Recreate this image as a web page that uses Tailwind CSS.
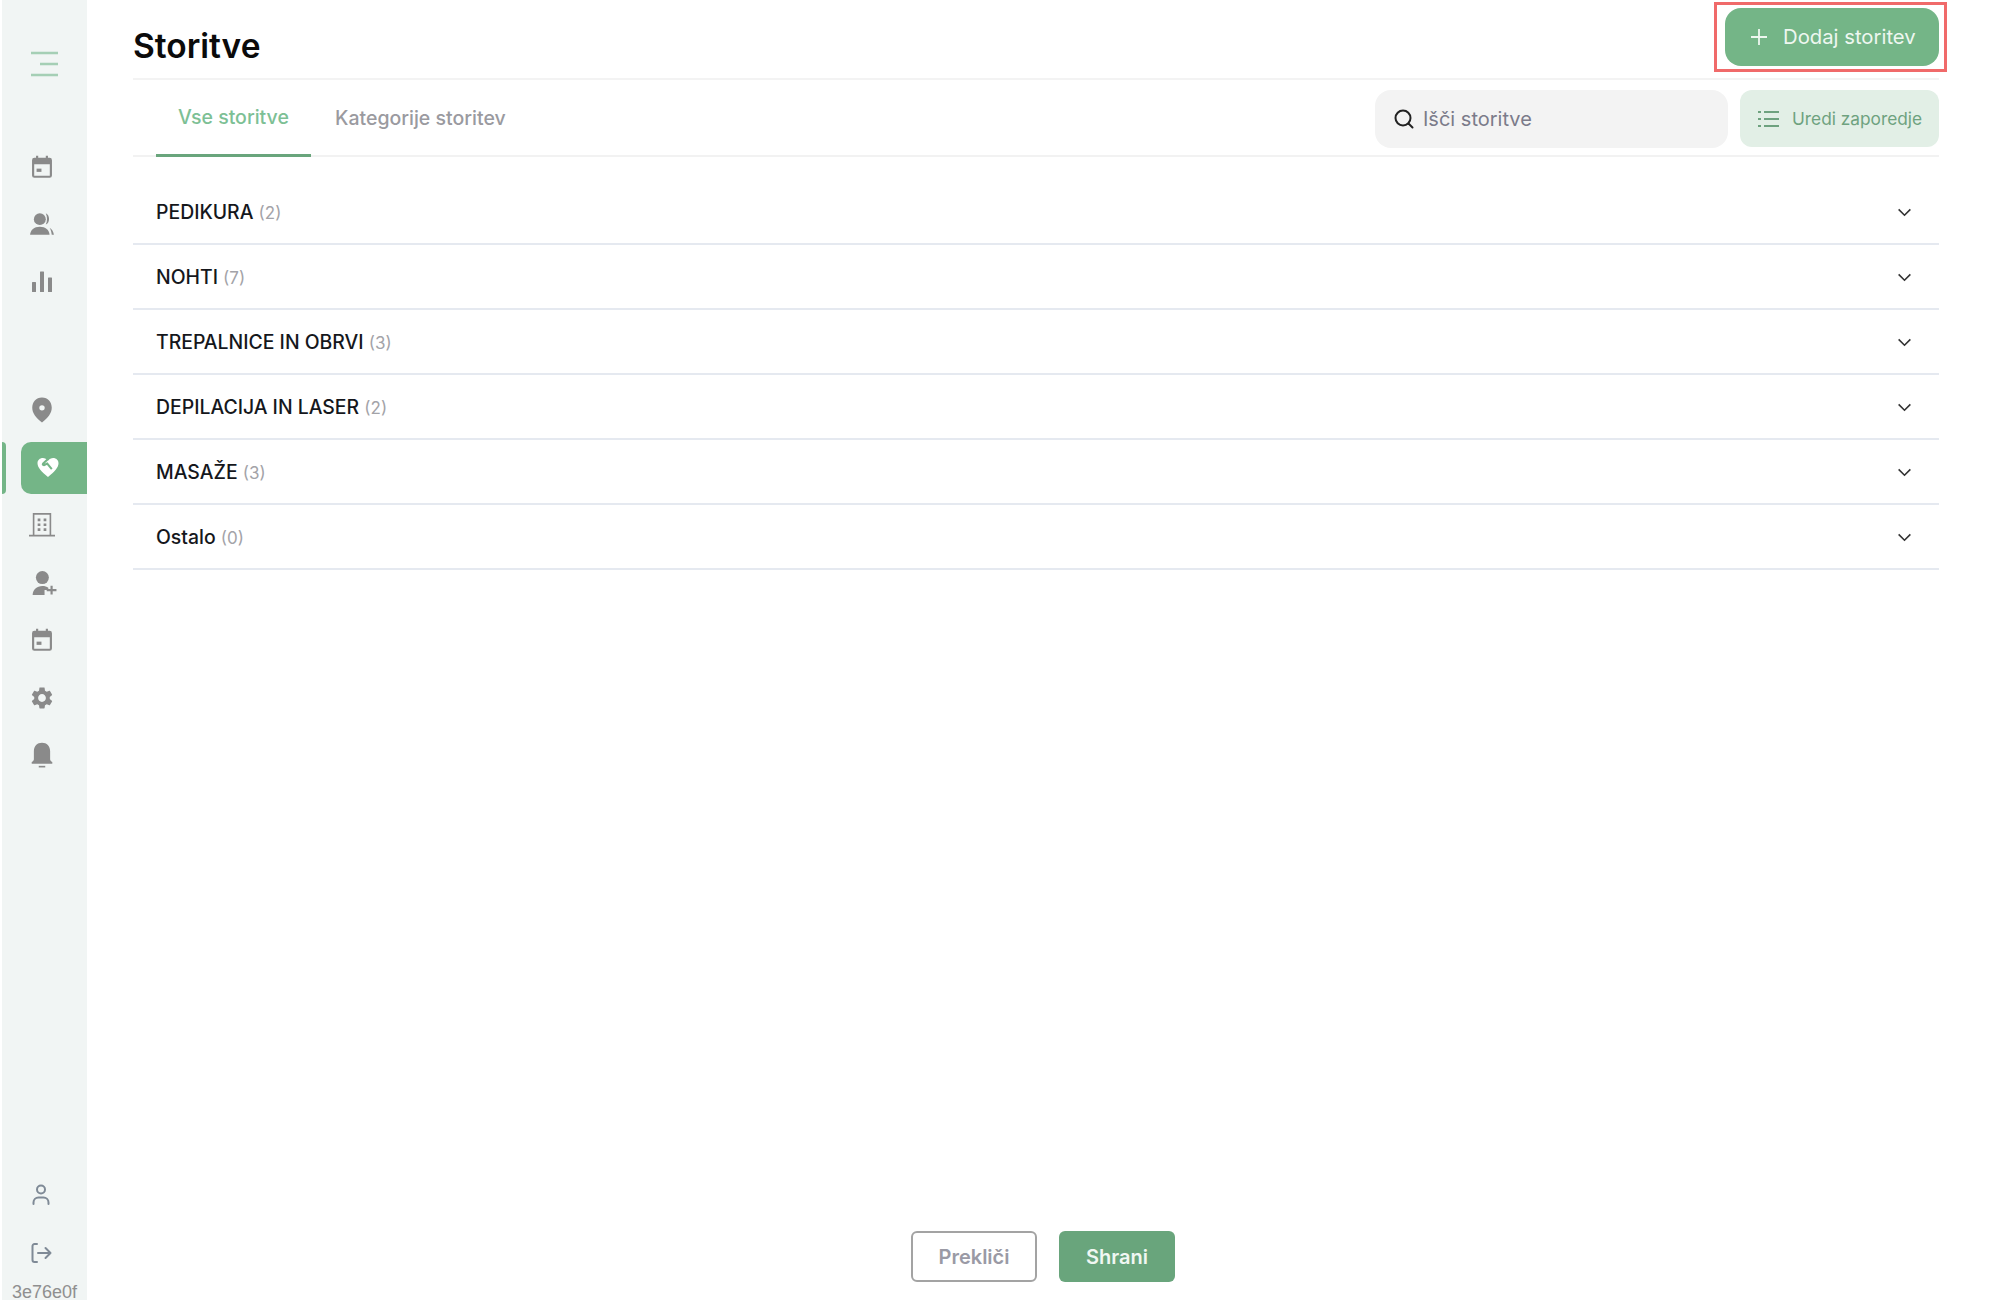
<!DOCTYPE html>
<html lang="sl">
<head>
  <meta charset="UTF-8">
  <title>Storitve</title>
  <script src="https://cdn.jsdelivr.net/npm/@tailwindcss/browser@4"></script>
</head>
<body class="bg-white font-['Inter',sans-serif]">
  <div class="flex h-[1300px] w-[2000px] overflow-hidden">

    <!-- Sidebar -->
    <aside class="ml-[2px] flex h-full w-[85px] shrink-0 flex-col bg-[#f1f5f4]">
      <div class="flex h-[128px] shrink-0 items-center pl-[29px]">
        <svg class="h-[28px] w-[28px]" viewBox="0 0 28 28" fill="none" stroke="#a5cfb5" stroke-width="2.6">
          <path d="M0 3h27M9 14h18M0 25h27"/>
        </svg>
      </div>
      <div class="h-[10px] shrink-0"></div>

      <nav class="flex flex-col text-[#8a8a8a]">
        <a class="flex h-[57.5px] items-center pl-[27px]">
          <svg class="h-[26px] w-[26px]" viewBox="0 0 24 24" fill="currentColor"><path fill-rule="evenodd" d="M19 3.500h-1.500V1.500h-2v2h-7v-2h-2v2H5a2.200 2.200 0 0 0-2.200 2.200v14.100A2.200 2.200 0 0 0 5 22h14a2.200 2.200 0 0 0 2.200-2.200V5.700A2.200 2.200 0 0 0 19 3.500zM4.800 9.500v10.300c0 .100.100.200.200.200h14c.100 0 .200-.100.200-.200V9.500z"/><rect x="7" y="13.500" width="4.500" height="3"/></svg>
        </a>
        <a class="flex h-[57.5px] items-center pl-[27px]">
          <svg class="h-[26px] w-[26px]" viewBox="0 0 24 24" fill="currentColor"><circle cx="10" cy="7.500" r="5.500"/><path d="M1 22c.400-4.700 3.700-7.500 9-7.500s8.600 2.800 9 7.500z"/><path d="M15.500 2c4 1.500 4 9 0 10.500 1.500-3 1.500-7.500 0-10.500z"/><path d="M19 15.500c2.200 1.200 3.500 3.500 4 6.500h-2c-.300-2.600-.800-4.500-2-6.500z"/></svg>
        </a>
        <a class="flex h-[57.5px] items-center pl-[28px]">
          <svg class="h-[24px] w-[24px]" viewBox="0 0 24 24" fill="currentColor"><rect x="2" y="12" width="4" height="10" rx=".500"/><rect x="10" y="1.500" width="4" height="20.500" rx=".500"/><rect x="18" y="7.500" width="4" height="14.500" rx=".500"/></svg>
        </a>

        <div class="h-[71px]"></div>

        <a class="flex h-[57.5px] items-center pl-[27px]">
          <svg class="h-[26px] w-[26px]" viewBox="0 0 24 24" fill="currentColor"><path fill-rule="evenodd" d="M12 .500C6.500 .500 3 4.700 3 10c0 5 3.500 9.500 9 13.500C17.500 19.500 21 15 21 10 21 4.700 17.500 .500 12 .500zM12 12.500a2.500 2.500 0 1 1 0-5 2.500 2.500 0 0 1 0 5z"/></svg>
        </a>

        <!-- Active item -->
        <a class="relative flex h-[57.5px] items-center">
          <span class="absolute left-0 top-[2.500px] h-[52px] w-[4px] rounded-r-[4px] bg-[#74b587]"></span>
          <span class="ml-[19px] flex h-[52px] w-[66px] items-center rounded-l-[10px] bg-[#74b587] pb-[2px] pl-[15px]">
            <svg class="h-[24px] w-[24px]" viewBox="0 0 24 24" fill="#fff"><path d="M12 22C5.500 16.500 1.500 12.500 1.500 8.200 1.500 5.200 3.900 3 6.800 3c2 0 3.900 1 5.200 2.700C13.300 4 15.200 3 17.200 3c2.900 0 5.300 2.200 5.300 5.200 0 4.300-4 8.300-10.500 13.800z"/><path d="M12.500 3.500 7 8.700Q6.200 10 8 10.200l3.200-1.700 4.600 5.700" fill="none" stroke="#74b587" stroke-width="2"/></svg>
          </span>
        </a>

        <a class="flex h-[57.5px] items-center pl-[27px]">
          <svg class="h-[26px] w-[26px]" viewBox="0 0 24 24" fill="currentColor"><path fill-rule="evenodd" d="M3.500 1h17v20H24v1.500H0V21h3.500zM5 2.500V21h14V2.500z"/><path d="M8 6h2.500v2.500H8zM13.500 6H16v2.500h-2.500zM8 10.500h2.500V13H8zM13.500 10.500H16V13h-2.500zM8 15h2.500v2.500H8zM13.500 15H16v2.500h-2.500z"/></svg>
        </a>
        <a class="flex h-[57.5px] items-center pl-[29px]">
          <svg class="h-[26px] w-[26px]" viewBox="0 0 24 24" fill="currentColor"><circle cx="10.500" cy="7" r="6"/><path d="M1.500 23c.300-5 3.800-8.200 9-8.200 2.200 0 4 .500 5.500 1.500v2.200h-3.500V23z"/><path d="M18 16.500h2v3h3.500v2H20v3h-2v-3h-3.500v-2H18z" transform="translate(0 -2)"/></svg>
        </a>
        <a class="flex h-[57.5px] items-center pl-[27px]">
          <svg class="h-[26px] w-[26px]" viewBox="0 0 24 24" fill="currentColor"><path fill-rule="evenodd" d="M19 3.500h-1.500V1.500h-2v2h-7v-2h-2v2H5a2.200 2.200 0 0 0-2.200 2.200v14.100A2.200 2.200 0 0 0 5 22h14a2.200 2.200 0 0 0 2.200-2.200V5.700A2.200 2.200 0 0 0 19 3.500zM4.800 9.500v10.300c0 .100.100.200.200.200h14c.100 0 .200-.100.200-.200V9.500z"/><rect x="7" y="13.500" width="4.500" height="3"/></svg>
        </a>
        <a class="flex h-[57.5px] items-center pl-[27px]">
          <svg class="h-[26px] w-[26px]" viewBox="0 0 24 24" fill="currentColor"><path fill-rule="evenodd" d="M19.140 12.940c.040-.300.060-.610.060-.940 0-.320-.020-.640-.070-.940l2.030-1.580c.180-.140.230-.410.120-.610l-1.920-3.320c-.120-.220-.370-.290-.590-.220l-2.390.960c-.500-.380-1.030-.700-1.620-.940l-.360-2.540c-.040-.240-.240-.410-.480-.410h-3.840c-.240 0-.430.170-.470.410l-.360 2.540c-.590.240-1.130.570-1.620.940l-2.390-.960c-.220-.080-.470 0-.590.220L2.740 8.870c-.120.210-.080.470.120.610l2.030 1.580c-.050.300-.090.630-.090.940s.020.640.070.940l-2.030 1.580c-.180.140-.230.410-.120.610l1.920 3.320c.120.220.370.290.590.220l2.390-.960c.500.380 1.030.700 1.620.940l.360 2.540c.050.240.240.410.480.410h3.840c.240 0 .440-.170.470-.410l.360-2.540c.590-.240 1.130-.560 1.620-.940l2.390.960c.220.080.470 0 .590-.220l1.920-3.320c.120-.220.070-.470-.120-.610l-2.010-1.580zM12 15.600c-1.980 0-3.600-1.620-3.600-3.600s1.620-3.600 3.600-3.600 3.600 1.620 3.600 3.600-1.620 3.600-3.600 3.600z"/></svg>
        </a>
        <a class="flex h-[57.5px] items-center pl-[27px]">
          <svg class="h-[26px] w-[26px]" viewBox="0 0 24 24" fill="currentColor"><path d="M12 .800c-4.500 0-7.500 3.200-7.500 7.500v7.700c0 1-.700 2-2 2.500V20h19v-1.500c-1.300-.500-2-1.500-2-2.500V8.300c0-4.300-3-7.500-7.500-7.500z"/><rect x="9" y="22" width="6" height="1.500"/></svg>
        </a>
      </nav>

      <div class="mt-auto flex flex-col">
        <a class="flex h-[58px] items-center pl-[27px]">
          <svg class="h-[24px] w-[24px]" viewBox="0 0 24 24" fill="none" stroke="#7f8a96" stroke-width="2" stroke-linecap="round"><circle cx="12" cy="6.500" r="4"/><path d="M4.500 21v-1.500a5 5 0 0 1 5-5h5a5 5 0 0 1 5 5V21"/></svg>
        </a>
        <a class="mt-[2px] flex h-[53px] items-center pl-[27px]">
          <svg class="h-[24px] w-[24px]" viewBox="0 0 24 24" fill="none" stroke="#7f8a96" stroke-width="2" stroke-linecap="round" stroke-linejoin="round"><path d="M8 3H5.500a2 2 0 0 0-2 2v14a2 2 0 0 0 2 2H8M9 12h12.500M16.500 7l5 5-5 5"/></svg>
        </a>
        <div class="h-[21px] pt-[5px] text-center font-['Liberation_Sans',sans-serif] text-[18px] leading-[16px] text-[#8f8f8f]">3e76e0f</div>
      </div>
    </aside>

    <!-- Main -->
    <main class="flex min-w-0 flex-1 flex-col pl-[46px] pr-[61px]">
      <header class="flex h-[80px] shrink-0 justify-between border-b-2 border-[#f3f3f3]">
        <h1 class="pt-[23px] text-[33.5px] font-semibold leading-[46px] text-[#0b0b0b]">Storitve</h1>
        <div class="relative mt-[8px] h-[58px]">
          <button class="flex h-[58px] w-[214px] items-center rounded-[16px] bg-[#74b587] pl-[25px] text-[20.3px] text-[#eef7f0]">
            <svg class="mr-[15px] h-[18px] w-[18px]" viewBox="0 0 18 18" fill="none" stroke="#eef7f0" stroke-width="1.800"><path d="M9 1v16M1 9h16"/></svg>
            Dodaj storitev
          </button>
          <span class="absolute -bottom-[6px] -left-[11px] -right-[8px] -top-[6px] border-[3px] border-[#f06a6a]"></span>
        </div>
      </header>

      <div class="flex h-[77px] shrink-0 justify-between border-b-2 border-[#f2f2f2] pl-[23px]">
        <div class="flex">
          <a class="-mb-[2px] flex h-[77px] w-[155px] items-center justify-center border-b-[3px] border-[#69a57c] pt-[1px] text-[19.5px] font-medium text-[#7dc095]">Vse storitve</a>
          <a class="ml-[24px] flex h-[77px] items-center text-[19.5px] font-medium text-[#9a9a9f]">Kategorije storitev</a>
        </div>
        <div class="flex items-start gap-[12px] pt-[10px]">
          <label class="flex h-[58px] w-[353px] items-center rounded-[16px] bg-[#f3f3f3] pl-[19px]">
            <svg class="mr-[9px] h-[20px] w-[20px]" viewBox="0 0 20 20" fill="none" stroke="#222" stroke-width="2" stroke-linecap="round"><circle cx="9" cy="9" r="7.500"/><path d="M14.500 14.500 18.500 18.500"/></svg>
            <span class="text-[20px] text-[#7b7b8a]">Išči storitve</span>
          </label>
          <button class="flex h-[57px] w-[199px] items-center rounded-[12px] bg-[#e2efe6] pl-[18px] text-[17.3px] text-[#6ea27f]">
            <svg class="mr-[13px] h-[20px] w-[21px]" viewBox="0 0 21 20" fill="none" stroke="#6ea27f" stroke-width="2"><path d="M0 3h3M6 3h15M0 10h3M6 10h15M0 17h3M6 17h15"/></svg>
            Uredi zaporedje
          </button>
        </div>
      </div>

      <ul class="mt-[23px] flex flex-col">
        <li class="flex h-[65px] items-center justify-between border-b-2 border-[#e5e9f0] pl-[23px] pr-[27px] pt-[2px]">
          <span class="text-[19.4px] font-medium text-[#15171c]">PEDIKURA <span class="text-[17px] font-normal text-[#a3a3a8]">(2)</span></span>
          <svg class="h-[9px] w-[15px]" viewBox="0 0 16 10" fill="none" stroke="#333" stroke-width="1.800"><path d="M1.500 1.500 8 8l6.500-6.500"/></svg>
        </li>
        <li class="flex h-[65px] items-center justify-between border-b-2 border-[#e5e9f0] pl-[23px] pr-[27px] pt-[2px]">
          <span class="text-[19.4px] font-medium text-[#15171c]">NOHTI <span class="text-[17px] font-normal text-[#a3a3a8]">(7)</span></span>
          <svg class="h-[9px] w-[15px]" viewBox="0 0 16 10" fill="none" stroke="#333" stroke-width="1.800"><path d="M1.500 1.500 8 8l6.500-6.500"/></svg>
        </li>
        <li class="flex h-[65px] items-center justify-between border-b-2 border-[#e5e9f0] pl-[23px] pr-[27px] pt-[2px]">
          <span class="text-[19.4px] font-medium text-[#15171c]">TREPALNICE IN OBRVI <span class="text-[17px] font-normal text-[#a3a3a8]">(3)</span></span>
          <svg class="h-[9px] w-[15px]" viewBox="0 0 16 10" fill="none" stroke="#333" stroke-width="1.800"><path d="M1.500 1.500 8 8l6.500-6.500"/></svg>
        </li>
        <li class="flex h-[65px] items-center justify-between border-b-2 border-[#e5e9f0] pl-[23px] pr-[27px] pt-[2px]">
          <span class="text-[19.4px] font-medium text-[#15171c]">DEPILACIJA IN LASER <span class="text-[17px] font-normal text-[#a3a3a8]">(2)</span></span>
          <svg class="h-[9px] w-[15px]" viewBox="0 0 16 10" fill="none" stroke="#333" stroke-width="1.800"><path d="M1.500 1.500 8 8l6.500-6.500"/></svg>
        </li>
        <li class="flex h-[65px] items-center justify-between border-b-2 border-[#e5e9f0] pl-[23px] pr-[27px] pt-[2px]">
          <span class="text-[19.4px] font-medium text-[#15171c]">MASAŽE <span class="text-[17px] font-normal text-[#a3a3a8]">(3)</span></span>
          <svg class="h-[9px] w-[15px]" viewBox="0 0 16 10" fill="none" stroke="#333" stroke-width="1.800"><path d="M1.500 1.500 8 8l6.500-6.500"/></svg>
        </li>
        <li class="flex h-[65px] items-center justify-between border-b-2 border-[#e5e9f0] pl-[23px] pr-[27px] pt-[2px]">
          <span class="text-[19.4px] font-medium text-[#15171c]">Ostalo <span class="text-[17px] font-normal text-[#a3a3a8]">(0)</span></span>
          <svg class="h-[9px] w-[15px]" viewBox="0 0 16 10" fill="none" stroke="#333" stroke-width="1.800"><path d="M1.500 1.500 8 8l6.500-6.500"/></svg>
        </li>
      </ul>

      <footer class="mt-auto flex justify-start gap-[22px] pb-[18px] pl-[778px]">
        <button class="h-[51px] w-[126px] rounded-[6px] border-2 border-[#a3a3a3] text-[20px] font-semibold text-[#9a9aa5]">Prekliči</button>
        <button class="h-[51px] w-[116px] rounded-[6px] bg-[#69a57c] text-[20px] font-semibold text-[#f0f7f2]">Shrani</button>
      </footer>
    </main>
  </div>
</body>
</html>
